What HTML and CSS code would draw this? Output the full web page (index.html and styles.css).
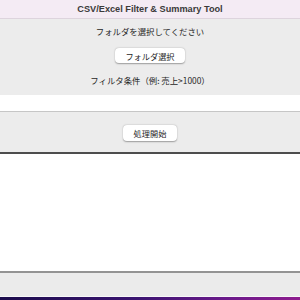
FILE: index.html
```html
<!DOCTYPE html>
<html lang="ja">
<head>
    <meta charset="UTF-8">
    <meta name="viewport" content="width=device-width, initial-scale=1.0">
    <title>CSV/Excel Filter &amp; Summary Tool</title>
    <link rel="stylesheet" href="styles.css">
</head>
<body>
    <div class="window">
        <div class="titlebar">CSV/Excel Filter &amp; Summary Tool</div>

        <div class="form">
            <div class="label first">フォルダを選択してください</div>
            <div class="btn-row"><button class="btn folder-btn">フォルダ選択</button></div>
            <div class="label second">フィルタ条件（例: 売上&gt;1000）</div>
        </div>

        <input class="filter-input" type="text">

        <div class="actions">
            <button class="btn run-btn">処理開始</button>
        </div>

        <textarea class="output"></textarea>

        <div class="statusbar"></div>
    </div>
    <div class="desktop"></div>
</body>
</html>
```

FILE: styles.css
```css
html, body {
    margin: 0;
    padding: 0;
    height: 300px;
    overflow: hidden;
}

body {
    font-family: "Noto Sans CJK JP", "Liberation Sans", sans-serif;
    color: #2b2b2b;
    background: #ececec;
}

.window {
    display: flex;
    flex-direction: column;
    height: 297px;
    background: #ececec;
}

.titlebar {
    height: 19px;
    line-height: 19px;
    box-sizing: border-box;
    border-bottom: 1px solid #ddd4dd;
    background: #f4ebf4;
    text-align: center;
    font-family: "Liberation Sans", sans-serif;
    font-weight: bold;
    font-size: 9.2px;
    color: #3a3a3a;
}

.form {
    display: flex;
    flex-direction: column;
    align-items: center;
}

.label {
    font-size: 8.4px;
    line-height: 12px;
    color: #262626;
}

.label.first {
    margin-top: 6px;
}

.label.second {
    margin-top: 11px;
}

.btn-row {
    margin-top: 11px;
}

.btn {
    display: block;
    font-family: "Noto Sans CJK JP", sans-serif;
    font-size: 8.2px;
    line-height: 14px;
    padding: 0;
    background: #fff;
    color: #1e1e1e;
    border: none;
    border-radius: 4px;
    box-shadow: 0 0.5px 1.5px rgba(0, 0, 0, 0.35);
}

.folder-btn {
    width: 70px;
    height: 15px;
}

.filter-input {
    display: block;
    margin: 9px 0 0;
    width: 100%;
    height: 17px;
    box-sizing: border-box;
    border: none;
    border-bottom: 1px solid #c6c6c6;
    background: #fff;
    outline: none;
}

.actions {
    display: flex;
    justify-content: center;
    height: 42px;
    box-sizing: border-box;
    padding-top: 13px;
    border-bottom: 2px solid #4d4d4d;
}

.run-btn {
    width: 54px;
    height: 16px;
}

.output {
    display: block;
    flex: 1;
    width: 100%;
    margin: 0;
    box-sizing: border-box;
    border: none;
    border-bottom: 2px solid #939393;
    background: #fff;
    resize: none;
    outline: none;
}

.statusbar {
    height: 24px;
    box-sizing: border-box;
    border-bottom: 1px solid #f8f8f8;
    background: #ebebeb;
}

.desktop {
    height: 3px;
    background: linear-gradient(90deg, #1c0d4c 0%, #3a1470 45%, #6a1a8a 75%, #8e1c8e 100%);
}
```
